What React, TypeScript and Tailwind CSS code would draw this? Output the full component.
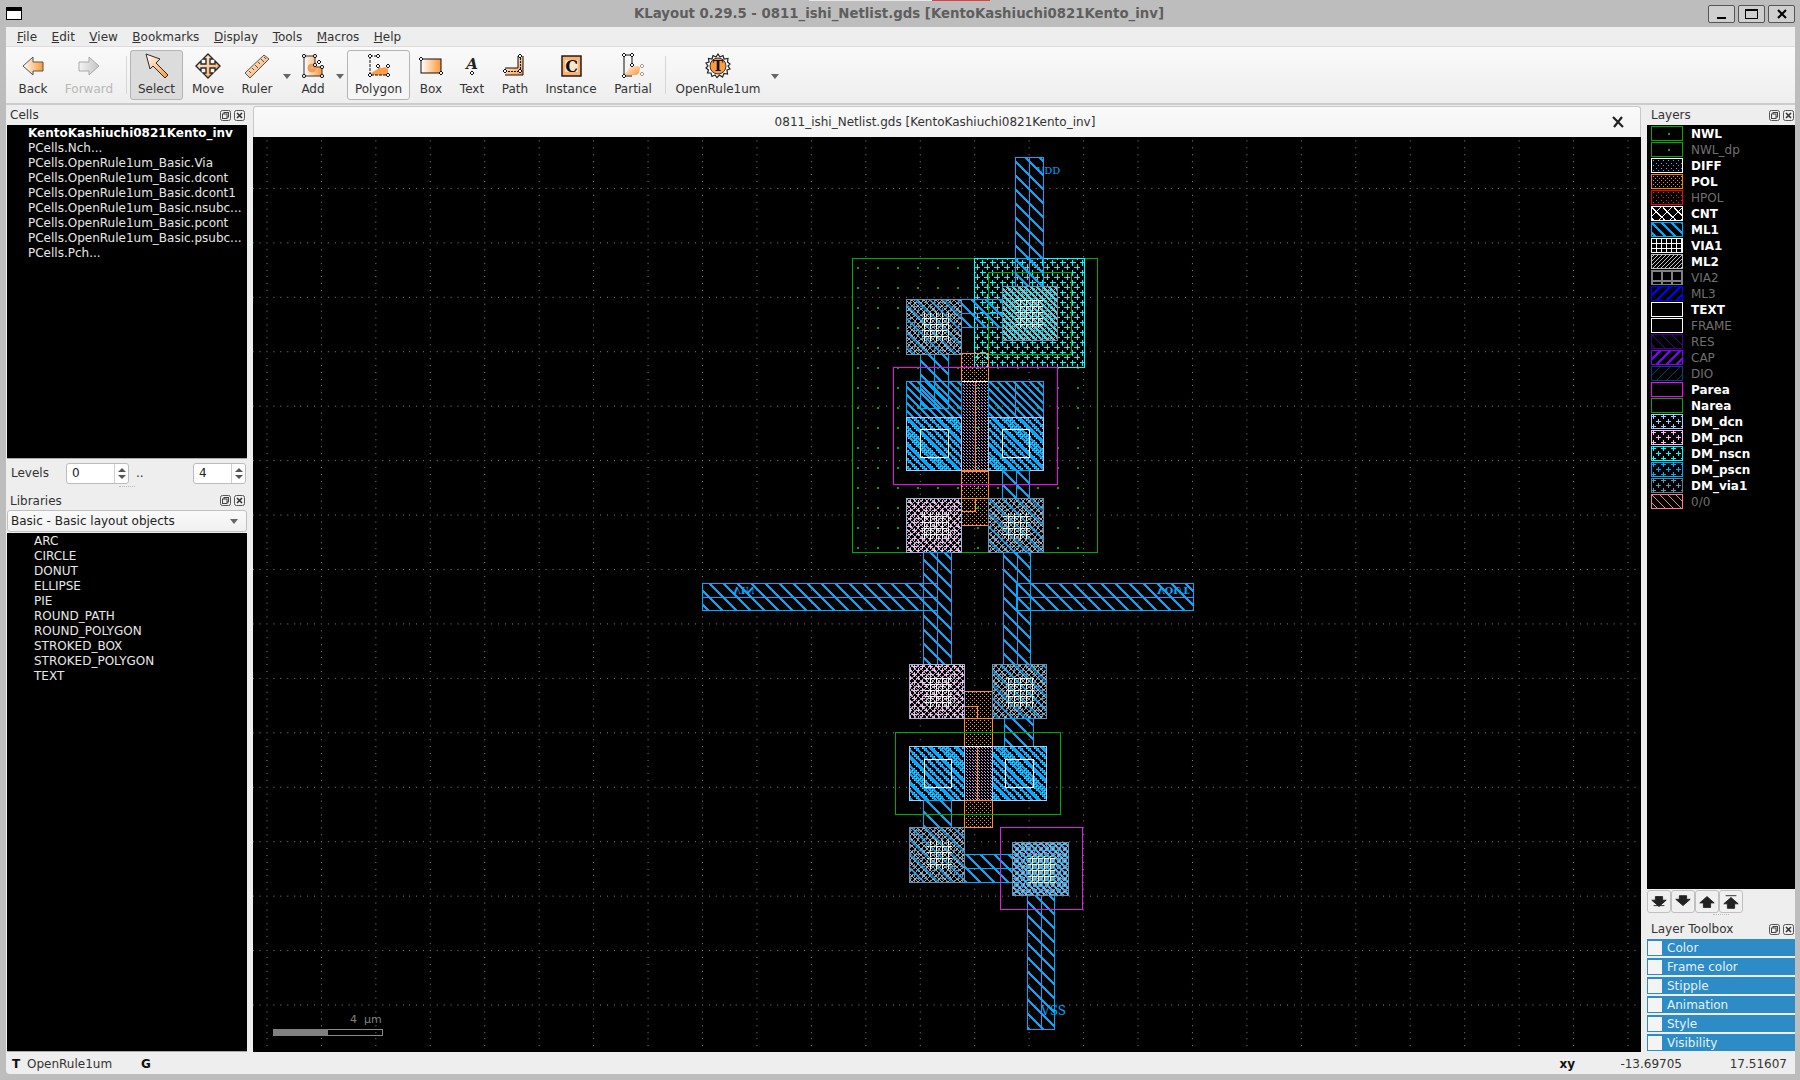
import React from "react";

const FONT = "font-['DejaVu_Sans',sans-serif]";

function plus(cx: number, cy: number, c: string, arm = 3, key?: string) {
  return (
    <g key={key} fill={c}>
      <rect x={cx - arm} y={cy} width={arm * 2 + 1} height={1} />
      <rect x={cx} y={cy - arm} width={1} height={arm * 2 + 1} />
    </g>
  );
}

function Hatch({ id, c, size = 16, w = 2, dir = "\\" }: { id: string; c: string; size?: number; w?: number; dir?: string }) {
  const d = dir === "\\" ? `M0 0L${size} ${size}M-2 ${size - 2}L2 ${size + 2}M${size - 2} -2L${size + 2} 2` : `M0 ${size}L${size} 0M-2 2L2 -2M${size - 2} ${size + 2}L${size + 2} ${size - 2}`;
  return (
    <pattern id={id} width={size} height={size} patternUnits="userSpaceOnUse">
      <path d={d} stroke={c} strokeWidth={w} fill="none" shapeRendering="crispEdges" />
    </pattern>
  );
}
function Dots({ id, c, size = 6, r = 1 }: { id: string; c: string; size?: number; r?: number }) {
  return (
    <pattern id={id} width={size} height={size} patternUnits="userSpaceOnUse">
      <rect x={0} y={0} width={r} height={r} fill={c} />
      <rect x={Math.floor(size / 2)} y={Math.floor(size / 2)} width={r} height={r} fill={c} />
    </pattern>
  );
}
function Plus({ id, c, size = 16, arm = 3 }: { id: string; c: string; size?: number; arm?: number }) {
  return (
    <pattern id={id} width={size} height={size} patternUnits="userSpaceOnUse">
      {plus(Math.floor(size / 4), Math.floor(size / 4), c, arm, "a")}
      {plus(Math.floor((size * 3) / 4), Math.floor((size * 3) / 4), c, arm, "b")}
    </pattern>
  );
}
function Sparse({ id, c }: { id: string; c: string }) {
  return (
    <pattern id={id} width={20} height={20} patternUnits="userSpaceOnUse" x={17} y={7}>
      <rect width={2} height={2} fill={c} />
    </pattern>
  );
}
function Grid({ id, c, size = 6, w = 1 }: { id: string; c: string; size?: number; w?: number }) {
  return (
    <pattern id={id} width={size} height={size} patternUnits="userSpaceOnUse">
      <rect width={size} height={w} fill={c} />
      <rect width={w} height={size} fill={c} />
    </pattern>
  );
}

const GP = 54.44;
function Defs() {
  const minor = Array.from({ length: 8 }, (_, i) => (i * GP) / 8);
  return (
    <svg className="absolute w-0 h-0">
      <defs>
        <linearGradient id="og" x1="0" y1="0" x2="1" y2="1">
          <stop offset="0" stopColor="#ffffff" />
          <stop offset="1" stopColor="#ff9838" />
        </linearGradient>
        <linearGradient id="ol" x1="0" y1="0" x2="1" y2="0">
          <stop offset="0" stopColor="#ffffff" />
          <stop offset="1" stopColor="#ff9636" />
        </linearGradient>
        <linearGradient id="gr" x1="0" y1="0" x2="1" y2="0">
          <stop offset="0" stopColor="#f4f4f4" />
          <stop offset="1" stopColor="#c4c4c4" />
        </linearGradient>
        <pattern id="grid" width={GP} height={GP} patternUnits="userSpaceOnUse" x={702} y={569}>
          {minor.map((m, i) => (
            <g key={i} fill="#8a8a8a" shapeRendering="crispEdges">
              <rect x={m} y={0} width={1} height={1} />
              <rect x={0} y={m} width={1} height={1} />
            </g>
          ))}
        </pattern>
        <Hatch id="ml1" c="#00aaff" size={14} />
        <Hatch id="ml1d" c="#00aaff" size={8} />
        <Sparse id="nwl" c="#00aa00" />
        <Dots id="pol" c="#ff9a50" size={4} r={1} />
        <Dots id="polb" c="#ff8a30" size={4} r={1} />
        <Dots id="chan" c="#d8a0e8" size={3} r={1} />
        <Dots id="diff" c="#8c8cff" size={5} r={1} />
        <Dots id="hpol" c="#ff2020" size={5} r={1} />
        <Plus id="nscn" c="#00ffff" size={10} />
        <Plus id="nscni" c="#00ffff" size={6} arm={1} />
        <Plus id="dcn" c="#88bbff" size={8} arm={2} />
        <Plus id="pcn" c="#ffb8f4" size={8} arm={2} />
        <Plus id="pscn" c="#20b0ff" size={6} arm={2} />
        <Plus id="via" c="#7090b0" size={8} arm={2} />
        <Plus id="dcni" c="#a6ccff" size={10} arm={2} />
        <Plus id="pcni" c="#ffb8f4" size={10} arm={2} />
        <Plus id="nscnic" c="#00ffff" size={10} arm={2} />
        <Plus id="pscnic" c="#00aaff" size={10} arm={2} />
        <Plus id="viaic" c="#7090b0" size={10} arm={2} />
        <pattern id="cnt" width={6} height={6} patternUnits="userSpaceOnUse">
          <path d="M0 0L6 6M6 0L0 6" stroke="#a8b0b8" strokeWidth={1} shapeRendering="crispEdges" />
        </pattern>
        <pattern id="cntic" width={11} height={11} patternUnits="userSpaceOnUse">
          <path d="M0 0L11 11M11 0L0 11" stroke="#ffffff" strokeWidth={1.4} shapeRendering="crispEdges" />
        </pattern>
        <pattern id="via1" width={6} height={6} patternUnits="userSpaceOnUse">
          <rect width={5} height={1} fill="#ffffff" />
          <rect width={1} height={5} fill="#ffffff" />
        </pattern>
        <Grid id="via1ic" c="#ffffff" size={5} />
        <Grid id="via2ic" c="#808080" size={10} w={2} />
        <Hatch id="ml2ic" c="#c8c8c8" size={4} w={1} dir="/" />
        <Hatch id="ml3ic" c="#0000ff" size={10} w={1.5} dir="/" />
        <Hatch id="resic" c="#400090" size={10} w={1} />
        <Hatch id="capic" c="#8000ff" size={10} w={1.5} dir="/" />
        <Hatch id="dioic" c="#004080" size={10} w={1} dir="/" />
        <Hatch id="zeroic" c="#ff8080" size={8} w={1} />
        <Hatch id="ml1ic" c="#00aaff" size={10} w={1.5} />
      </defs>
    </svg>
  );
}

const rr = (n: number) => Math.round(n) + 0.5;
function R({ b, fill = "none", stroke = "none", sw = 1, op }: { b: number[]; fill?: string; stroke?: string; sw?: number; op?: number }) {
  const x = rr(b[0]);
  const y = rr(b[1]);
  return <rect x={x} y={y} width={rr(b[2]) - x} height={rr(b[3]) - y} fill={fill} stroke={stroke} strokeWidth={sw} opacity={op} />;
}
function L({ x1, y1, x2, y2, c = "#00aaff" }: { x1: number; y1: number; x2: number; y2: number; c?: string }) {
  return <line x1={rr(x1)} y1={rr(y1)} x2={rr(x2)} y2={rr(y2)} stroke={c} strokeWidth={1} />;
}
const ML = "#00aaff";
function Wire({ b, dense }: { b: number[]; dense?: boolean }) {
  const horizontal = b[2] - b[0] > b[3] - b[1];
  return (
    <g>
      <R b={b} fill={dense ? "url(#ml1d)" : "url(#ml1)"} stroke={ML} />
      {!dense && (horizontal ? <L x1={b[0]} y1={(b[1] + b[3]) / 2} x2={b[2]} y2={(b[1] + b[3]) / 2} /> : <L x1={(b[0] + b[2]) / 2} y1={b[1]} x2={(b[0] + b[2]) / 2} y2={b[3]} />)}
    </g>
  );
}
function ViaBox({ b, v, dm, c, hatch = true }: { b: number[]; v: number[]; dm?: string; c: string; hatch?: boolean }) {
  return (
    <g>
      <R b={b} fill="#000" />
      <R b={b} fill="url(#cnt)" />
      <R b={b} fill="url(#via)" />
      {dm && <R b={b} fill={`url(#${dm})`} />}
      {hatch && <R b={b} fill="url(#ml1)" op={0.6} />}
      <R b={b} stroke={c} sw={1.4} />
      <R b={v} fill="url(#via1)" />
    </g>
  );
}
function DiffBox({ b, v }: { b: number[]; v: number[] }) {
  return (
    <g>
      <R b={b} fill="#000" />
      <R b={b} fill="url(#dcn)" />
      <R b={b} fill="url(#ml1d)" />
      <R b={b} fill="url(#ml1)" />
      <R b={b} stroke="#a6ccff" sw={1.4} />
      <R b={v} stroke="#ffffff" sw={1.2} />
    </g>
  );
}

function Canvas() {
  return (
    <svg viewBox="253 137 1388 915" className="block w-[1388px] h-[915px] bg-black" shapeRendering="crispEdges">
      <rect x={253} y={137} width={1388} height={915} fill="url(#grid)" />

      {/* PMOS */}
      <R b={[852, 258, 1097, 552]} fill="url(#nwl)" stroke="#00aa00" />
      <Wire b={[1015, 157, 1043, 300]} />
      <R b={[974, 258, 1084, 367]} fill="#000" />
      <R b={[974, 258, 1084, 367]} fill="url(#nscn)" stroke="#00ffff" sw={1.4} />
      <R b={[988, 272, 1071, 354]} stroke="#00aa00" />
      <Wire b={[920, 299, 1015, 327]} />
      <Wire b={[1015, 258, 1043, 327]} />
      <ViaBox b={[1002, 286, 1057, 340]} v={[1015, 299, 1043, 327]} dm="nscni" c="#7090b0" hatch={false} />
      <R b={[961, 353, 988, 381]} fill="url(#pol)" stroke="#ff8a30" />
      <R b={[961, 381, 988, 470]} fill="url(#chan)" stroke="#ff8a30" />
      <L x1={975} y1={381} x2={975} y2={471} c="#ff8a30" />
      <L x1={961} y1={381} x2={988} y2={381} c="#ffffff" />
      <L x1={961} y1={471} x2={988} y2={471} c="#ffffff" />
      <R b={[961, 471, 988, 498]} fill="url(#pol)" stroke="#ff8a30" />
      <R b={[961, 498, 988, 525]} fill="url(#pol)" stroke="#ff8a30" />
      <R b={[961, 498, 975, 511]} stroke="#ff8a30" />

      <Wire b={[906, 381, 961, 417]} dense />
      <Wire b={[988, 381, 1043, 417]} dense />
      <Wire b={[920, 354, 948, 408]} />
      <L x1={1015} y1={381} x2={1015} y2={417} />
      <DiffBox b={[906, 417, 961, 470]} v={[920, 429, 948, 457]} />
      <DiffBox b={[988, 417, 1043, 470]} v={[1002, 429, 1029, 457]} />
      <Wire b={[1002, 470, 1029, 498]} />
      <ViaBox b={[906, 498, 961, 552]} v={[920, 511, 948, 538]} dm="pcn" c="#a6b4d8" hatch={false} />
      <ViaBox b={[988, 498, 1043, 552]} v={[1002, 512, 1029, 539]} c="#7090b0" />
      <ViaBox b={[906, 299, 961, 354]} v={[921, 312, 948, 341]} c="#7090b0" />
      <R b={[893, 367, 1057, 484]} stroke="#ff00ff" />

      {/* wires */}
      <Wire b={[702, 583, 937, 610]} />
      <Wire b={[1016, 583, 1193, 610]} />
      <Wire b={[923, 552, 951, 664]} />
      <Wire b={[1003, 552, 1030, 664]} />

      {/* NMOS */}
      <R b={[964, 691, 992, 718]} fill="url(#pol)" stroke="#ff8a30" />
      <R b={[964, 706, 977, 718]} stroke="#ff8a30" />
      <ViaBox b={[909, 664, 964, 718]} v={[924, 677, 951, 706]} dm="pcn" c="#a6b4d8" hatch={false} />
      <ViaBox b={[992, 664, 1046, 718]} v={[1005, 677, 1033, 706]} c="#7090b0" />
      <Wire b={[1004, 718, 1033, 746]} />
      <R b={[964, 718, 992, 746]} fill="url(#pol)" stroke="#ff8a30" />
      <R b={[964, 746, 992, 800]} fill="url(#chan)" stroke="#ff8a30" />
      <L x1={977} y1={746} x2={977} y2={800} c="#ff8a30" />
      <L x1={964} y1={746} x2={992} y2={746} c="#ffffff" />
      <L x1={964} y1={800} x2={992} y2={800} c="#ffffff" />
      <R b={[964, 800, 992, 827]} fill="url(#pol)" stroke="#ff8a30" />
      <DiffBox b={[909, 746, 964, 800]} v={[924, 759, 951, 787]} />
      <DiffBox b={[992, 746, 1046, 800]} v={[1005, 759, 1033, 787]} />
      <Wire b={[923, 800, 951, 827]} />
      <R b={[895, 732, 1060, 814]} stroke="#00aa00" />

      <Wire b={[923, 854, 1012, 882]} />
      <ViaBox b={[909, 827, 964, 882]} v={[926, 840, 951, 868]} c="#7090b0" />
      <Wire b={[1027, 895, 1054, 1029]} />
      <ViaBox b={[1012, 842, 1068, 895]} v={[1027, 855, 1054, 882]} dm="pscn" c="#7090b0" hatch={false} />
      <R b={[1000, 827, 1082, 909]} stroke="#e020e0" />

      <g fontFamily="'DejaVu Serif',serif" fill={ML} shapeRendering="auto">
        <text x={1037} y={174} fontSize={10}>VDD</text>
        <text x={1041} y={1015} fontSize={12}>VSS</text>
        <text transform="translate(733 587) scale(1 -1)" fontSize={10} fontWeight="bold">VIN</text>
        <text transform="translate(1157 587) scale(1 -1)" fontSize={10} fontWeight="bold">VOUT</text>
        <text x={350} y={1023} fontSize={11} fontFamily="'DejaVu Sans',sans-serif" fill="#808080" xmlSpace="preserve">4  µm</text>
      </g>
      <rect x={273.5} y={1029.5} width={109} height={6} fill="none" stroke="#8a8a8a" />
      <rect x={273} y={1029} width={55} height={7} fill="#808080" />
    </svg>
  );
}

/* ---------- toolbar icons ---------- */
const ST = "#2a2a2a";
const handle = (x: number, y: number, k: string, c = "#111") => <path key={k} d={`M${x} ${y - 2}L${x + 2} ${y}L${x} ${y + 2}L${x - 2} ${y}Z`} fill="#fff" stroke={c} strokeWidth={1} />;

function Ico({ children }: { children: React.ReactNode }) {
  return <svg viewBox="0 0 26 26" className="w-[26px] h-[26px] block">{children}</svg>;
}
const icons: Record<string, React.ReactNode> = {
  Back: <Ico><path d="M3 13L13 4V9H23V18H13V22Z" fill="url(#ol)" stroke="#555" /></Ico>,
  Forward: <Ico><path d="M23 13L13 4V9H3V18H13V22Z" fill="url(#gr)" stroke="#aaa" /></Ico>,
  Select: <Ico><path d="M2 1L16 6L12 10L24 22L21 25L9 13L6 16Z" fill="url(#og)" stroke={ST} /></Ico>,
  Move: <Ico><path d="M13 1L18 6H15V11H20V8L25 13L20 18V15H15V20H18L13 25L8 20H11V15H6V18L1 13L6 8V11H11V6H8Z" fill="url(#og)" stroke={ST} strokeWidth={1.4} /></Ico>,
  Ruler: <Ico><path d="M1 20L20 2L25 6L6 25Z" fill="url(#og)" stroke="#555" /><path d="M5 18l2 2M8 15l2 2M11 12l3 3M14 9l2 2M17 6l3 3M20 4l2 2" stroke="#555" fill="none" /></Ico>,
  Add: <Ico><path d="M4 3H15V14H22V23H4Z" fill="url(#ol)" stroke="#333" /><circle cx="12" cy="15" r="4" fill="#ff9a40" stroke="#e0a070" /><circle cx="12" cy="15" r="1.3" fill="#bbb" />{[[4,3],[15,3],[15,12],[22,14],[22,23],[4,23]].map((p,i)=><circle key={i} cx={p[0]} cy={p[1]} r="1.6" fill="#fff" stroke="#111" />)}{handle(19,9,"h1")}</Ico>,
  Polygon: <Ico><path d="M4 3H12V13H22V22H4Z" fill="none" /><path d="M4 22H22V16Q20 13 16 15Q13 15 12 11L12 16Q4 20 4 22Z" fill="#ff9c48" /><path d="M4 3H12M4 3V22H22" stroke="#111" strokeDasharray="3 1" fill="none" />{handle(4,3,"a")}{handle(12,3,"b")}{handle(22,13,"c")}{handle(22,22,"d")}{handle(4,22,"e")}{handle(12,13,"f")}</Ico>,
  Box: <Ico><rect x="3" y="6" width="20" height="14" fill="url(#ol)" stroke="#111" />{handle(3,6,"a")}{handle(23,20,"b")}</Ico>,
  Path: <Ico><path d="M3 22H21V3H16V15H3Z" fill="url(#og)" /><path d="M3 22H21V3M3 15H16V3" stroke="#111" fill="none" /><path d="M3 18.5H18.5V3" stroke="#111" strokeDasharray="2 1" fill="none" />{handle(3,18,"a")}{handle(18,18,"b")}{handle(18,3,"c")}</Ico>,
  Instance: <Ico><rect x="4" y="3" width="19" height="20" fill="#ffb070" stroke="#111" strokeWidth={1.4} /><rect x="7" y="7" width="13" height="12" fill="#ffe4c8" /><text x="13.5" y="19" textAnchor="middle" fontFamily="'DejaVu Serif',serif" fontWeight="bold" fontSize="16" fill="#111">C</text></Ico>,
  Partial: <Ico><path d="M4 22H16Q20 21 20 14Q16 12 12 14L12 10Q8 18 4 22Z" fill="url(#og)" /><path d="M4 2H12V12M4 2V23H12" stroke="#111" fill="none" />{handle(4,2,"a")}{handle(12,2,"b")}{handle(12,12,"c")}{handle(4,23,"d")}{handle(22,13,"e","#999")}{handle(22,21,"f","#999")}</Ico>,
  OpenRule1um: <Ico><path d="M13 1L15 4L18 2.5L19 6L23 5.5L22.5 9L25 11L23 13L25 16L22 17L22.5 21L19 20.5L17.5 24L14.5 22L12 24.5L10 22L7 23.5L6 20L2.5 20L3.5 17L1 15L3 13L1 10L4 9L3.5 5.5L7 6L8 2.5L11 4Z" fill="#fff" stroke="#222" strokeWidth={1.2} /><circle cx="13" cy="13" r="8" fill="#ff9c3c" stroke="#333" /><text x="13" y="18" textAnchor="middle" fontFamily="'DejaVu Serif',serif" fontWeight="bold" fontSize="14" fill="#111">T</text></Ico>,
};

function TB({ name, w, kind, disabled }: { name: string; w: string; kind?: "on" | "box"; disabled?: boolean }) {
  const k = kind === "on" ? "bg-[#dcdcdc] border border-[#b4b4b4] rounded-[3px]" : kind === "box" ? "bg-[#f6f6f6] border border-[#b4b4b4] rounded-[3px]" : "";
  return (
    <div className={`${w} h-[50px] flex flex-col items-center justify-start shrink-0 ${k} ${kind ? "pt-[2px]" : "pt-[3px]"}`}>
      {name === "Text" ? (
        <svg viewBox="0 0 26 26" className="w-[26px] h-[26px] block">
          <text x="13" y="16" textAnchor="middle" fontFamily="'DejaVu Serif',serif" fontStyle="italic" fontWeight="bold" fontSize="15" fill="#222">A</text>
          {handle(13, 20, "h")}
        </svg>
      ) : (
        icons[name]
      )}
      <span className={`text-[12px] leading-[14px] mt-[3px] whitespace-nowrap ${disabled ? "text-[#b8b8b8]" : "text-[#333]"}`}>{name}</span>
    </div>
  );
}
function Arrow({ w }: { w: string }) {
  return (
    <div className={`${w} h-[50px] flex items-center justify-center shrink-0`}>
      <svg width="8" height="5" className="mt-[2px]"><path d="M0 0H8L4 5Z" fill="#666" /></svg>
    </div>
  );
}
function Sep({ w, cls }: { w: string; cls: string }) {
  return (
    <div className={`${w} h-[50px] flex items-center shrink-0 ${cls}`}>
      <div className="w-px h-[38px] bg-[#d6d6d6]" />
    </div>
  );
}

function DockBtns() {
  return (
    <div className="flex gap-[3px]">
      <svg width="11" height="11" viewBox="0 0 11 11">
        <rect x=".5" y=".5" width="10" height="10" rx="2" fill="#eee" stroke="#555" />
        <rect x="4" y="2.5" width="4.5" height="4.5" fill="none" stroke="#444" />
        <rect x="2.5" y="4" width="4.5" height="4.5" fill="#eee" stroke="#444" />
      </svg>
      <svg width="11" height="11" viewBox="0 0 11 11">
        <rect x=".5" y=".5" width="10" height="10" rx="2" fill="#eee" stroke="#555" />
        <path d="M3 3L8 8M8 3L3 8" stroke="#333" strokeWidth="1.6" />
      </svg>
    </div>
  );
}
function DockTitle({ t, cls = "" }: { t: string; cls?: string }) {
  return (
    <div className={`flex items-center justify-between pl-[4px] pr-[2px] text-[12px] text-[#333] ${cls}`}>
      <span>{t}</span>
      <DockBtns />
    </div>
  );
}
function Spin({ v, w }: { v: string; w: string }) {
  return (
    <div className={`${w} h-[21px] bg-white border border-[#bcbcbc] rounded-[3px] flex items-center justify-between shrink-0`}>
      <span className="pl-[5px] text-[12px] text-[#222]">{v}</span>
      <div className="w-[14px] h-full border-l border-[#d0d0d0] flex flex-col items-center justify-center gap-[3px]">
        <svg width="8" height="4"><path d="M0 4L4 0L8 4Z" fill="#555" /></svg>
        <svg width="8" height="4"><path d="M0 0L8 0L4 4Z" fill="#555" /></svg>
      </div>
    </div>
  );
}

const cells = ["PCells.Nch...", "PCells.OpenRule1um_Basic.Via", "PCells.OpenRule1um_Basic.dcont", "PCells.OpenRule1um_Basic.dcont1", "PCells.OpenRule1um_Basic.nsubc...", "PCells.OpenRule1um_Basic.pcont", "PCells.OpenRule1um_Basic.psubc...", "PCells.Pch..."];
const libs = ["ARC", "CIRCLE", "DONUT", "ELLIPSE", "PIE", "ROUND_PATH", "ROUND_POLYGON", "STROKED_BOX", "STROKED_POLYGON", "TEXT"];
const layers: [string, string, string, boolean][] = [
  ["NWL", "#00aa00", "nwl", true],
  ["NWL_dp", "#00aa00", "nwl", false],
  ["DIFF", "#ffffff", "diff", true],
  ["POL", "#ff8000", "polb", true],
  ["HPOL", "#ff0000", "hpol", false],
  ["CNT", "#ffffff", "cntic", true],
  ["ML1", "#00aaff", "ml1ic", true],
  ["VIA1", "#ffffff", "via1ic", true],
  ["ML2", "#c0c0c0", "ml2ic", true],
  ["VIA2", "#808080", "via2ic", false],
  ["ML3", "#0000ff", "ml3ic", false],
  ["TEXT", "#ffffff", "", true],
  ["FRAME", "#ffffff", "", false],
  ["RES", "#400090", "resic", false],
  ["CAP", "#8000ff", "capic", false],
  ["DIO", "#004080", "dioic", false],
  ["Parea", "#ff00ff", "", true],
  ["Narea", "#00aa00", "", true],
  ["DM_dcn", "#a6ccff", "dcni", true],
  ["DM_pcn", "#ffb8f4", "pcni", true],
  ["DM_nscn", "#00ffff", "nscnic", true],
  ["DM_pscn", "#00aaff", "pscnic", true],
  ["DM_via1", "#6080a0", "viaic", true],
  ["0/0", "#ff8080", "zeroic", false],
];
const toolbox = ["Color", "Frame color", "Stipple", "Animation", "Style", "Visibility"];

const moveIcons = [
  "M4 14H16M6 4H14V8H18L10 15L2 8H6Z",
  "M6 3H14V7H18L10 14L2 7H6Z",
  "M6 16H14V11H18L10 4L2 11H6Z",
  "M4 3H16M6 17H14V12H18L10 5L2 12H6Z",
];

function Handle({ cls = "h-[4px]" }: { cls?: string }) {
  return <div className={`${cls} flex justify-center`}><div className="w-[16px] border-t border-dotted border-[#bbb]" /></div>;
}

export default function App() {
  return (
    <div className={`relative w-[1800px] h-[1080px] bg-[#bdbdbd] overflow-hidden flex flex-col ${FONT}`}>
      <Defs />
      <div className="absolute left-[809px] top-0 w-[123px] h-px bg-[#e8e8e8]" />
      <div className="absolute left-[932px] top-0 w-[58px] h-px bg-[#e04040]" />
      {/* title bar */}
      <div className="h-[27px] shrink-0 flex items-center pl-[6px] pr-[5px] relative">
        <div className="w-[16px] h-[13px] border border-black border-t-[4px] bg-white shrink-0" />
        <div className="flex-1 text-center pl-[68px] text-[13.3px] font-bold text-[#5e5e5e] whitespace-nowrap">KLayout 0.29.5 - 0811_ishi_Netlist.gds [KentoKashiuchi0821Kento_inv]</div>
        <div className="flex gap-[3px]">
          <div className="w-[27px] h-[18px] bg-[#cfcfcf] border border-[#555] rounded-[2px] flex items-center justify-center">
            <div className="w-[9px] h-[2px] bg-black mt-[8px]" />
          </div>
          <div className="w-[27px] h-[18px] bg-[#cfcfcf] border border-[#555] rounded-[2px] flex items-center justify-center">
            <div className="w-[13px] h-[10px] border border-black border-t-2" />
          </div>
          <div className="w-[27px] h-[18px] bg-[#cfcfcf] border border-[#555] rounded-[2px] flex items-center justify-center">
            <svg width="10" height="10"><path d="M1 1L9 9M9 1L1 9" stroke="#000" strokeWidth="2" /></svg>
          </div>
        </div>
      </div>

      <div className="ml-[6px] mr-[5px] flex-1 flex flex-col bg-[#eeeeee] rounded-bl-[4px] min-h-0">
        {/* menu */}
        <div className="h-[20px] shrink-0 border-b border-[#dcdcdc] flex items-center gap-[14.5px] pl-[11px] text-[12px] text-[#333]">
          {[["F", "ile"], ["E", "dit"], ["V", "iew"], ["B", "ookmarks"], ["D", "isplay"], ["T", "ools"], ["M", "acros"], ["H", "elp"]].map(([a, b]) => (
            <span key={a}><span className="underline">{a}</span>{b}</span>
          ))}
        </div>
        {/* toolbar */}
        <div className="h-[58px] shrink-0 bg-gradient-to-b from-[#fafafa] to-[#eeeeee] border-b-2 border-[#cccccc] flex items-center">
          <TB name="Back" w="w-[54px]" />
          <TB name="Forward" w="w-[58px]" disabled />
          <Sep w="w-[12px]" cls="justify-end pr-[3px]" />
          <TB name="Select" w="w-[53px]" kind="on" />
          <TB name="Move" w="w-[50px]" />
          <TB name="Ruler" w="w-[48px]" />
          <Arrow w="w-[12px]" />
          <TB name="Add" w="w-[40px]" />
          <Arrow w="w-[14px]" />
          <TB name="Polygon" w="w-[63px]" kind="box" />
          <TB name="Box" w="w-[42px]" />
          <TB name="Text" w="w-[40px]" />
          <TB name="Path" w="w-[46px]" />
          <TB name="Instance" w="w-[66px]" />
          <TB name="Partial" w="w-[58px]" />
          <Sep w="w-[6px]" cls="justify-center" />
          <TB name="OpenRule1um" w="w-[100px]" />
          <Arrow w="w-[14px]" />
        </div>

        {/* main */}
        <div className="flex-1 flex min-h-0">
          {/* left */}
          <div className="w-[241px] shrink-0 flex flex-col text-[12px]">
            <DockTitle t="Cells" cls="h-[20px]" />
            <div className="h-[334px] bg-black ml-px pl-[21px] pt-px leading-[15px] text-[12px] text-[#e8e8e8] whitespace-nowrap overflow-hidden border-b border-[#aaa]">
              <div className="font-bold text-white">KentoKashiuchi0821Kento_inv</div>
              {cells.map((c) => <div key={c}>{c}</div>)}
            </div>
            <div className="h-[27px] flex items-center pl-[5px] text-[#333] pt-[1px]">
              <span className="w-[55px]">Levels</span>
              <Spin v="0" w="w-[63px]" />
              <span className="ml-[7px] w-[57px]">..</span>
              <Spin v="4" w="w-[53px]" />
            </div>
            <Handle cls="h-[4px]" />
            <DockTitle t="Libraries" cls="h-[21px]" />
            <div className="h-[22px] -mt-px ml-px border border-[#c0c0c0] rounded-[3px] bg-gradient-to-b from-[#fafafa] to-[#f0f0f0] flex items-center justify-between pl-[3px] pr-[8px] text-[#222]">
              <span>Basic - Basic layout objects</span>
              <svg width="8" height="5"><path d="M0 0H8L4 5Z" fill="#666" /></svg>
            </div>
            <div className="flex-1 mt-px ml-px bg-black pl-[27px] pt-[1px] leading-[15px] text-[#e8e8e8] border-b border-[#aaa] min-h-0">
              {libs.map((c) => <div key={c}>{c}</div>)}
            </div>
          </div>
          {/* center */}
          <div className="w-[1388px] shrink-0 ml-[6px] flex flex-col">
            <div className="h-[31px] shrink-0 mt-[1px] bg-gradient-to-b from-[#fafafa] to-[#f4f4f4] border-t border-x border-[#c8c8c8] rounded-t-[3px] flex items-center text-[12px] text-[#333] relative">
              <span className="flex-1 text-center pl-[18px] mr-[13px]">0811_ishi_Netlist.gds [KentoKashiuchi0821Kento_inv]</span>
              <svg width="14" height="14" className="mr-[15px]"><path d="M2 2L12 12M11 2L3 12" stroke="#222" strokeWidth="2.2" /></svg>
            </div>
            <Canvas />
          </div>
          {/* right */}
          <div className="w-[148px] shrink-0 ml-[6px] flex flex-col text-[12px]">
            <DockTitle t="Layers" cls="h-[20px] pl-[3px] !pr-[1px]" />
            <div className="h-[764px] bg-black pt-[1px] pl-[4px]">
              {layers.map(([n, c, p, b]) => (
                <div key={n} className="h-[16px] flex items-center">
                  <svg width="33" height="16" className="shrink-0">
                    <rect x=".5" y=".5" width="31" height="14" fill="#000" />
                    {p && <rect x=".5" y=".5" width="31" height="14" fill={`url(#${p})`} />}
                    <rect x=".5" y=".5" width="31" height="14" fill="none" stroke={c} />
                  </svg>
                  <span className={`ml-[7px] leading-[16px] ${b ? "font-bold text-white" : "text-[#707070]"}`}>{n}</span>
                </div>
              ))}
            </div>
            <div className="h-[25px] flex pt-[1px]">
              {moveIcons.map((d, i) => (
                <div key={i} className="w-[24px] h-[23px] border border-[#c0c0c0] rounded-[3px] bg-[#f0f0f0] flex items-center justify-center">
                  <svg width="18" height="18" viewBox="0 0 20 20"><path d={d} fill="#222" stroke="#222" /></svg>
                </div>
              ))}
            </div>
            <Handle cls="h-[5px]" />
            <DockTitle t="Layer Toolbox" cls="h-[20px] pl-[3px] !pr-[1px]" />
            <div className="flex flex-col gap-[2px]">
              {toolbox.map((t) => (
                <div key={t} className="h-[17px] bg-[#2d8bc6] flex items-center pl-px text-[#e6f2fa]">
                  <div className="w-[14px] h-[14px] bg-[#f4f4f4] mr-[5px]" />
                  {t}
                </div>
              ))}
            </div>
          </div>
        </div>
        {/* status */}
        <div className="h-[22px] shrink-0 flex items-center pt-[2px] text-[12px] text-[#333]">
          <span className="w-[21px] pl-[6px] font-bold text-[#111]">T</span>
          <span className="w-[114px]">OpenRule1um</span>
          <span className="font-bold text-[#111]">G</span>
          <span className="ml-auto font-bold text-[#111] mr-[36px]">xy</span>
          <span className="w-[71px] text-right">-13.69705</span>
          <span className="w-[105px] text-right mr-[8px]">17.51607</span>
        </div>
      </div>
      <div className="h-[6px] shrink-0" />
    </div>
  );
}
